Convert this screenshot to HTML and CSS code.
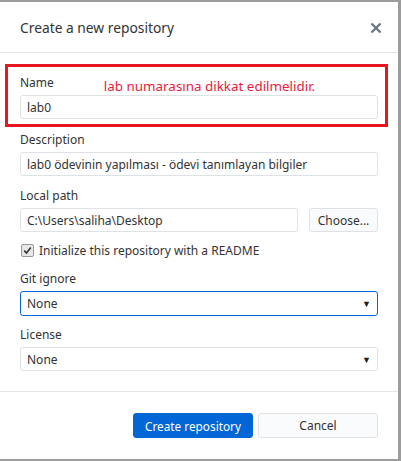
FILE: index.html
```html
<!DOCTYPE html>
<html>
<head>
<meta charset="utf-8">
<link rel="stylesheet" href="styles.css">
</head>
<body>
<div class="dialog">
  <div class="header">
    <span class="title">Create a new repository</span>
    <svg class="close" width="12" height="12" viewBox="0 0 12 12"><path d="M1.5 1.5 L10.5 10.5 M10.5 1.5 L1.5 10.5" stroke="#6a737d" stroke-width="2.2" stroke-linecap="butt"/></svg>
  </div>
  <div class="body">
    <div class="highlight">
      <div class="label-row">
        <span class="label">Name</span>
        <span class="note">lab numarasına dikkat edilmelidir.</span>
      </div>
      <div class="input">lab0</div>
    </div>
    <div class="label gap-desc">Description</div>
    <div class="input">lab0 ödevinin yapılması - ödevi tanımlayan bilgiler</div>
    <div class="label gap-path">Local path</div>
    <div class="path-row">
      <div class="input grow">C:\Users\saliha\Desktop</div>
      <div class="btn choose">Choose...</div>
    </div>
    <div class="check-row">
      <span class="checkbox"><svg width="9" height="9" viewBox="0 0 9 9"><path d="M1.2 4.6 L3.5 7 L7.8 1.6" fill="none" stroke="#333" stroke-width="1.6"/></svg></span>
      <span>Initialize this repository with a README</span>
    </div>
    <div class="label gap-git">Git ignore</div>
    <div class="input select focused"><span>None</span><span class="arrow">▼</span></div>
    <div class="label gap-lic">License</div>
    <div class="input select"><span>None</span><span class="arrow">▼</span></div>
  </div>
  <div class="footer">
    <div class="btn primary">Create repository</div>
    <div class="btn cancel">Cancel</div>
  </div>
</div>
</body>
</html>
```

FILE: styles.css
```css
html, body {
  margin: 0;
  padding: 0;
}
body {
  background: #9c9c9c;
  width: 401px;
  height: 461px;
  overflow: hidden;
  font-family: "Noto Sans", "Open Sans", sans-serif;
  font-size: 12px;
  color: #24292e;
}
.dialog {
  margin-top: 2px;
  width: 398px;
  height: 457px;
  background: #fff;
  display: flex;
  flex-direction: column;
}
.header {
  height: 50px;
  border-bottom: 1px solid #e1e4e8;
  display: flex;
  align-items: center;
  justify-content: space-between;
  padding: 0 16px 0 20px;
}
.title {
  font-size: 13.8px;
  color: #333;
}
.close {
  margin-top: 2px;
}
.body {
  padding: 0 20px;
  display: flex;
  flex-direction: column;
}
.highlight {
  margin: 11px -10px 0 -15px;
  padding: 8px 7px 5px 12px;
  border: 3px solid #e8161f;
}
.label-row {
  display: flex;
  align-items: flex-end;
  height: 16px;
}
.label {
  line-height: 16px;
  height: 16px;
  color: #333;
}
.note {
  margin-left: 50px;
  font-size: 13.4px;
  line-height: 16px;
  color: #ea1c3c;
  position: relative;
  top: 3px;
}
.input {
  margin-top: 4px;
  height: 22px;
  border: 1px solid #dfe2e5;
  border-radius: 3px;
  padding: 0 6px;
  display: flex;
  align-items: center;
  color: #333;
  background: #fff;
}
.gap-desc { margin-top: 5px; }
.gap-path { margin-top: 12px; }
.gap-git { margin-top: 13px; }
.gap-lic { margin-top: 11px; }
.path-row {
  display: flex;
  gap: 11px;
  margin-top: 4px;
}
.path-row .input {
  margin-top: 0;
}
.grow { flex: 1; }
.btn {
  display: flex;
  align-items: center;
  justify-content: center;
  border: 1px solid #dfe2e5;
  border-radius: 3px;
  background: #fafbfc;
  color: #333;
  box-sizing: border-box;
}
.choose {
  width: 69px;
  height: 24px;
}
.check-row {
  margin-top: 10px;
  height: 16px;
  display: flex;
  align-items: center;
  gap: 5px;
  color: #333;
}
.checkbox {
  width: 11px;
  height: 11px;
  border: 1px solid #9a9a9a;
  border-radius: 2px;
  background: #e6e6e6;
  display: flex;
  align-items: center;
  justify-content: center;
  margin-left: 1px;
}
.select {
  justify-content: space-between;
}
.focused {
  height: 23px;
  border-color: #0366d6;
}
.arrow {
  font-size: 9px;
  color: #222;
}
.footer {
  margin-top: 20px;
  border-top: 1px solid #e1e4e8;
  display: flex;
  justify-content: flex-end;
  gap: 5px;
  padding: 21px 20px 0 0;
}
.primary {
  width: 120px;
  height: 25px;
  background: #0366d6;
  border-color: #0366d6;
  color: #fff;
  font-size: 11.8px;
}
.cancel {
  width: 120px;
  height: 25px;
  font-size: 12px;
}
```
